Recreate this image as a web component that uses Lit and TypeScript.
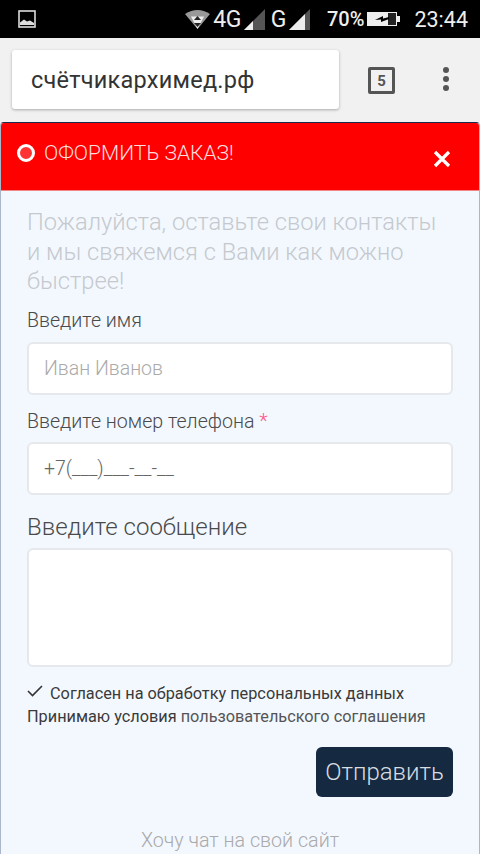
import { LitElement, css, html, svg } from "lit";
import { customElement } from "lit/decorators.js";

const signal = (width: number) => svg`
  <svg width="21" height="21" viewBox="0 0 21 21">
    <path d="M21 0V21H0Z" fill="#555" />
    <path d="M${width} ${21 - width}V21H0Z" fill="#eee" />
  </svg>
`;

@customElement("app-root")
export class AppRoot extends LitElement {
  static styles = css`
    :host {
      display: flex;
      flex-direction: column;
      width: 480px;
      height: 854px;
      overflow: hidden;
      background: #f1f1f1;
      font-family: Roboto, "Noto Sans", sans-serif;
    }
    .status {
      flex: none;
      height: 38px;
      box-sizing: border-box;
      background: #000;
      color: #eee;
      display: flex;
      align-items: center;
      padding: 0 12px 0 18px;
      font-size: 20px;
    }
    .status .spacer {
      flex: 1;
    }
    .status .net {
      margin-left: 3px;
      font-size: 23px;
      letter-spacing: -0.5px;
    }
    .status .signal {
      display: flex;
      margin-left: 3px;
    }
    .status .g {
      margin-left: 6px;
    }
    .status .pct {
      margin: 0 3px 0 17px;
      font-weight: 500;
    }
    .status .time {
      margin-left: 14px;
      font-size: 21.5px;
    }
    .toolbar {
      flex: none;
      height: 84px;
      box-sizing: border-box;
      display: flex;
      align-items: flex-start;
      padding: 12px 0 0 12px;
    }
    .url {
      width: 327px;
      height: 59px;
      box-sizing: border-box;
      background: #fff;
      border-radius: 3px;
      box-shadow: 0 1px 3px rgba(0, 0, 0, 0.3);
      padding-left: 19px;
      display: flex;
      align-items: center;
      color: #333;
      font-size: 23.5px;
      letter-spacing: 0.25px;
    }
    .tabs {
      margin: 17px 0 0 29px;
      width: 27px;
      height: 27px;
      box-sizing: border-box;
      border: 3px solid #555;
      border-radius: 2px;
      display: flex;
      align-items: center;
      justify-content: center;
      color: #555;
      font-size: 15px;
      font-weight: 700;
    }
    .dots {
      margin: 17px 0 0 48px;
      display: flex;
      flex-direction: column;
      gap: 3px;
    }
    .dots span {
      width: 6px;
      height: 6px;
      border-radius: 50%;
      background: #555;
    }
    .panel {
      flex: 1;
      min-height: 0;
      background: #f3f8ff;
      border: solid #a9b6cc;
      border-width: 0 1px;
      border-top: 1px solid #1a2a4a;
      border-radius: 4px 4px 0 0;
      overflow: hidden;
      display: flex;
      flex-direction: column;
    }
    .head {
      flex: none;
      height: 68px;
      box-sizing: border-box;
      background: #f00;
      color: #fdd;
      display: flex;
      align-items: center;
      padding: 0 28px 7px 16px;
      border-bottom: 1px solid #e88;
      font-size: 21px;
      font-weight: 300;
    }
    .head .dot {
      width: 18px;
      height: 18px;
      box-sizing: border-box;
      border: 3.5px solid #fff;
      border-radius: 50%;
      background: #f33;
      margin-right: 9px;
    }
    .head .title {
      flex: 1;
    }
    .head svg {
      margin-top: 11px;
    }
    .body {
      flex: 1;
      padding: 17px 26px 0;
      color: #555;
    }
    .lead {
      margin: 0;
      padding-right: 10px;
      color: #c5c9cd;
      font-size: 23.7px;
      line-height: 29.5px;
      font-weight: 300;
    }
    label {
      display: block;
      font-size: 19.6px;
      font-weight: 300;
      line-height: 24px;
      color: #4a4a4a;
    }
    .first {
      margin-top: 12.5px;
    }
    .star {
      color: #f58;
    }
    .field {
      box-sizing: border-box;
      height: 53px;
      margin-top: 9px;
      background: #fff;
      border: 2px solid #e6e8eb;
      border-radius: 6px;
      padding-left: 15px;
      display: flex;
      align-items: center;
      font-size: 19.5px;
      font-weight: 300;
      color: #aaa;
    }
    .field.mask {
      color: #666;
      margin-top: 8px;
    }
    .gap {
      margin-top: 15px;
    }
    .big {
      margin-top: 17.5px;
      font-size: 24px;
      line-height: 28px;
      font-weight: 300;
    }
    .area {
      box-sizing: border-box;
      height: 119px;
      margin-top: 7.5px;
      background: #fff;
      border: 2px solid #e6e8eb;
      border-radius: 6px;
    }
    .agree {
      margin-top: 15px;
      font-size: 16.3px;
      line-height: 23px;
      color: #3a3a3a;
    }
    .agree svg {
      margin-right: 7px;
      vertical-align: 2px;
    }
    .agree .link {
      color: #555;
    }
    .actions {
      display: flex;
      justify-content: flex-end;
      margin-top: 19px;
    }
    .send {
      width: 137px;
      height: 50px;
      border-radius: 6px;
      background: #152a40;
      color: #d8dde2;
      display: flex;
      align-items: center;
      justify-content: center;
      font-size: 24px;
      font-weight: 300;
    }
    .promo {
      margin-top: 31.5px;
      text-align: center;
      font-size: 19.7px;
      font-weight: 300;
      color: #aaa;
    }
  `;

  render() {
    return html`
      <div class="status">
        <svg width="18" height="18" viewBox="0 0 18 18">
          <rect x="1" y="1" width="16" height="16" fill="none" stroke="#ddd" stroke-width="1.6" />
          <path d="M2 15V12.5L6 9.5L9 11.5L12 10.5L16 13V15Z" fill="#ddd" />
        </svg>
        <span class="spacer"></span>
        <svg width="25" height="21" viewBox="0 0 25 21">
          <path d="M0 5Q12.5 -3 25 5L12.5 20Z" fill="#999" />
          <path d="M6 7.5H19L12.5 20Z" fill="#eee" />
          <path d="M12.5 7L9 11H16ZM12.5 18L9 14H16Z" fill="#222" />
        </svg>
        <span class="net">4G</span>
        <span class="signal">${signal(9)}</span>
        <span class="net g">G</span>
        <span class="signal">${signal(16)}</span>
        <span class="pct">70%</span>
        <svg width="33" height="14" viewBox="0 0 33 14">
          <rect x="0.5" y="0.5" width="29" height="13" fill="#222" stroke="#eee" />
          <rect x="1" y="1" width="20" height="12" fill="#eee" />
          <rect x="30" y="4" width="3" height="6" fill="#eee" />
          <path d="M8 8L16 4V6.5L22 5V7L14 10V7.5Z" fill="#000" />
        </svg>
        <span class="time">23:44</span>
      </div>
      <div class="toolbar">
        <div class="url">счётчикархимед.рф</div>
        <div class="tabs">5</div>
        <div class="dots"><span></span><span></span><span></span></div>
      </div>
      <div class="panel">
        <div class="head">
          <span class="dot"></span>
          <span class="title">ОФОРМИТЬ ЗАКАЗ!</span>
          <svg width="18" height="18" viewBox="0 0 18 18">
            <path d="M2 2L16 16M16 2L2 16" stroke="#fff" stroke-width="3.2" />
          </svg>
        </div>
        <div class="body">
          <p class="lead">Пожалуйста, оставьте свои контакты и мы свяжемся с Вами как можно быстрее!</p>
          <label class="first">Введите имя</label>
          <div class="field">Иван Иванов</div>
          <label class="gap">Введите номер телефона <span class="star">*</span></label>
          <div class="field mask">+7(___)___-__-__</div>
          <label class="big">Введите сообщение</label>
          <div class="area"></div>
          <div class="agree">
            <svg width="16" height="12" viewBox="0 0 16 12">
              <path d="M1 6L5.5 10.5L15 1" fill="none" stroke="#333" stroke-width="1.6" />
            </svg>Согласен на обработку персональных данных<br />
            Принимаю условия <span class="link">пользовательского соглашения</span>
          </div>
          <div class="actions"><div class="send">Отправить</div></div>
          <div class="promo">Хочу чат на свой сайт</div>
        </div>
      </div>
    `;
  }
}
